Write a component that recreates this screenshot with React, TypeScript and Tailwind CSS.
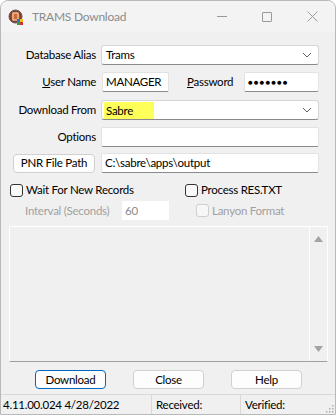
import React from 'react';

const font = { fontFamily: 'Lato, "Noto Sans", sans-serif' };

const Chevron = () => (
  <svg width="10" height="6" viewBox="0 0 10 6" className="text-[#5f5f5f]">
    <path d="M1 1 L5 5 L9 1" fill="none" stroke="currentColor" strokeWidth="1" />
  </svg>
);

const Select = ({ value, highlight }: { value: string; highlight?: boolean }) => (
  <div className="w-[218px] h-[20px] bg-white border border-[#d6d6d6] border-b-[#8a8a8a] rounded-[3px] flex items-center justify-between pl-[2px] pr-[6px]">
    <span className={highlight ? 'bg-[#ffff5a] w-[50px] h-[17px] leading-[17px] pl-[2px]' : 'pl-[2px]'}>{value}</span>
    <Chevron />
  </div>
);

const Field = ({ value, w, className = '' }: { value?: string; w: string; className?: string }) => (
  <div className={`${w} h-[20px] bg-white border border-[#e2e2e2] border-b-[#8a8a8a] rounded-[2px] flex items-center pl-[3px] whitespace-nowrap ${className}`}>
    {value}
  </div>
);

const Check = ({ disabled }: { disabled?: boolean }) => (
  <div
    className={
      disabled
        ? 'w-[13px] h-[13px] shrink-0 rounded-[3px] border border-[#cfcfcf] bg-[#f7f7f7]'
        : 'w-[13px] h-[13px] shrink-0 rounded-[3px] border border-[#333333] bg-[#f9f9f9]'
    }
  />
);

const Btn = ({ label, primary, w = 'w-[71px]' }: { label: string; primary?: boolean; w?: string }) => (
  <div
    className={`${w} h-[19px] rounded-[4px] bg-[#fdfdfd] border flex items-center justify-center whitespace-nowrap ${
      primary ? 'border-[#0067c0]' : 'border-[#d0d0d0]'
    }`}
  >
    {label}
  </div>
);

const AppIcon = () => (
  <svg width="16" height="16" viewBox="0 0 16 16">
    <circle cx="7.5" cy="7.5" r="6.5" fill="#8b3a2a" stroke="#5a5a5a" strokeWidth="1" />
    <circle cx="7.5" cy="7.5" r="4" fill="#c86a3a" />
    <rect x="5" y="4" width="5" height="7" fill="none" stroke="#f2d0a0" strokeWidth="1.2" />
    <rect x="9" y="10" width="3" height="3" fill="#2f6fd0" />
    <rect x="12" y="10" width="3" height="3" fill="#e8c020" />
    <rect x="9" y="13" width="3" height="3" fill="#30a040" />
    <rect x="12" y="13" width="3" height="3" fill="#d03030" />
  </svg>
);

export default function App() {
  return (
    <div
      style={font}
      className="w-[336px] h-[415px] bg-[#f0f0f0] border border-[#b9b9b9] rounded-t-[8px] overflow-hidden flex flex-col text-[11.5px] tracking-[-0.25px] text-black whitespace-nowrap"
    >
      {/* title bar */}
      <div className="h-[31px] bg-[#f3f3f3] flex items-center shrink-0">
        <div className="pl-[7px] pr-[8px]">
          <AppIcon />
        </div>
        <span className="text-[#8c8c8c] text-[12px]">TRAMS Download</span>
        <div className="ml-auto flex items-center h-full">
          <div className="w-[45px] flex justify-center">
            <div className="w-[10px] h-px bg-[#9a9a9a]" />
          </div>
          <div className="w-[45px] flex justify-center">
            <div className="w-[10px] h-[10px] border border-[#9a9a9a] rounded-[1px]" />
          </div>
          <div className="w-[46px] flex justify-center">
            <svg width="11" height="11" viewBox="0 0 11 11">
              <path d="M0.5 0.5 L10.5 10.5 M10.5 0.5 L0.5 10.5" stroke="#9a9a9a" strokeWidth="1" />
            </svg>
          </div>
        </div>
      </div>

      {/* form */}
      <div className="flex flex-col pt-[13px]">
        <div className="flex items-center h-[20px]">
          <span className="w-[95px] text-right">Database Alias</span>
          <div className="ml-[5px]">
            <Select value="Trams" />
          </div>
        </div>

        <div className="flex items-center h-[20px] mt-[7px]">
          <span className="w-[95px] text-right">
            <u>U</u>ser Name
          </span>
          <Field value="MANAGER" w="w-[67px]" className="ml-[6px]" />
          <span className="ml-[18px] w-[57px]">
            <u>P</u>assword
          </span>
          <Field value="●●●●●●●" w="w-[75px]" className="text-[8px] tracking-[1px]" />
        </div>

        <div className="flex items-center h-[20px] mt-[8px]">
          <span className="w-[95px] text-right">Download From</span>
          <div className="ml-[5px]">
            <Select value="Sabre" highlight />
          </div>
        </div>

        <div className="flex items-center h-[20px] mt-[7px]">
          <span className="w-[95px] text-right">Options</span>
          <Field w="w-[218px]" className="ml-[5px]" />
        </div>

        <div className="flex items-center h-[20px] mt-[6px]">
          <div className="ml-[12px]">
            <Btn label="PNR File Path" w="w-[82px]" />
          </div>
          <Field value="C:\sabre\apps\output" w="w-[218px]" className="ml-[6px]" />
        </div>

        <div className="flex items-center h-[14px] mt-[10px]">
          <div className="ml-[9px] w-[175px] flex items-center gap-[3px]">
            <Check />
            <span>Wait For New Records</span>
          </div>
          <div className="flex items-center gap-[3px]">
            <Check />
            <span>Process RES.TXT</span>
          </div>
        </div>

        <div className="flex items-center h-[19px] mt-[4px]">
          <span className="ml-[24px] w-[97px] text-[#a0a0a0]">Interval (Seconds)</span>
          <div className="w-[47px] h-[19px] bg-white flex items-center pl-[3px] text-[#8a8a8a]">60</div>
          <div className="ml-[27px] flex items-center gap-[3px]">
            <Check disabled />
            <span className="text-[#a0a0a0]">Lanyon Format</span>
          </div>
        </div>

        {/* memo */}
        <div className="ml-[8px] mt-[6px] w-[319px] h-[136px] border border-white border-b-[#a0a0a0] flex">
          <div className="flex-1" />
          <div className="w-[18px] border-l border-white flex flex-col items-center justify-between py-[9px]">
            <svg width="9" height="6" viewBox="0 0 9 6">
              <path d="M4.5 0 L9 6 L0 6 Z" fill="#a3a3a3" />
            </svg>
            <svg width="9" height="6" viewBox="0 0 9 6">
              <path d="M0 0 L9 0 L4.5 6 Z" fill="#a3a3a3" />
            </svg>
          </div>
        </div>

        {/* buttons */}
        <div className="flex items-center mt-[8px] pl-[34px] gap-[27px]">
          <Btn label="Download" primary />
          <Btn label="Close" />
          <Btn label="Help" />
        </div>
      </div>

      {/* status bar */}
      <div className="mt-auto h-[20px] border-t border-[#d9d9d9] flex items-center relative">
        <span className="w-[150px] pl-[2px]">4.11.00.024 4/28/2022</span>
        <span className="w-[89px] h-full border-l border-[#d9d9d9] pl-[4px] flex items-center">Received:</span>
        <span className="flex-1 h-full border-l border-[#d9d9d9] pl-[4px] flex items-center">Verified:</span>
        <svg width="10" height="10" viewBox="0 0 10 10" className="absolute right-[1px] bottom-[1px]">
          <rect x="8" y="2" width="1.5" height="1.5" fill="#b0b0b0" />
          <rect x="5" y="5" width="1.5" height="1.5" fill="#b0b0b0" />
          <rect x="8" y="5" width="1.5" height="1.5" fill="#b0b0b0" />
          <rect x="2" y="8" width="1.5" height="1.5" fill="#b0b0b0" />
          <rect x="5" y="8" width="1.5" height="1.5" fill="#b0b0b0" />
          <rect x="8" y="8" width="1.5" height="1.5" fill="#b0b0b0" />
        </svg>
      </div>
    </div>
  );
}
